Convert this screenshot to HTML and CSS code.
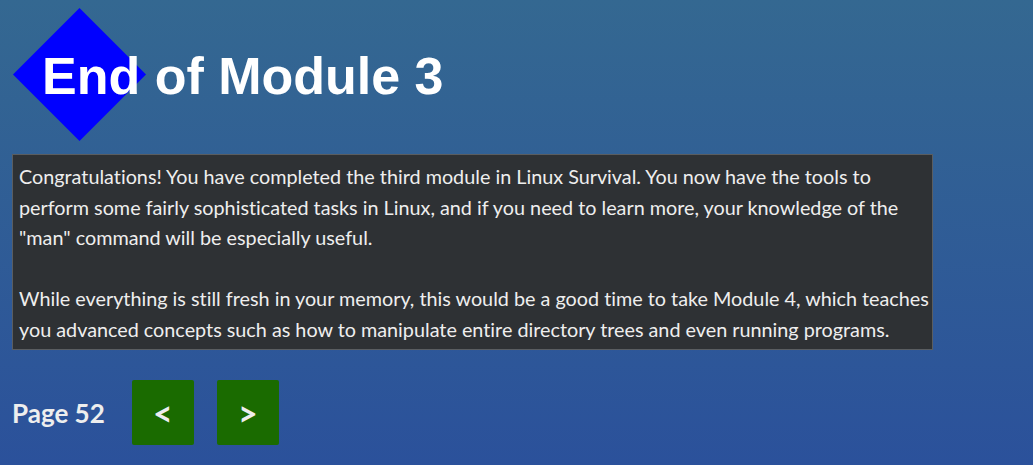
FILE: index.html
```html
<!DOCTYPE html>
<html lang="en">
<head>
<meta charset="utf-8">
<title>End of Module 3</title>
<link rel="stylesheet" href="styles.css">
</head>
<body>
<header class="banner">
  <svg class="diamond" width="133" height="133" viewBox="0 0 133 133" aria-hidden="true">
    <polygon points="66.5,0 133,66.5 66.5,133 0,66.5" fill="#0000ff"/>
  </svg>
  <h1 class="title">End of Module 3</h1>
</header>
<main class="panel">
  <p class="copy">Congratulations! You have completed the third module in Linux Survival. You now have the tools to perform some fairly sophisticated tasks in Linux, and if you need to learn more, your knowledge of the "man" command will be especially useful.<br><br>While everything is still fresh in your memory, this would be a good time to take Module 4, which teaches you advanced concepts such as how to manipulate entire directory trees and even running programs.</p>
</main>
<nav class="pager">
  <span class="page-num">Page 52</span>
  <a class="nav-btn prev" href="#">&lt;</a>
  <a class="nav-btn next" href="#">&gt;</a>
</nav>
</body>
</html>
```
FILE: styles.css
```css
html, body {
  margin: 0;
  height: 100%;
}
body {
  background: linear-gradient(to bottom, #346891 0%, #2b519b 100%);
  color: #eeeeee;
  font-family: Lato, "Open Sans", sans-serif;
  overflow: hidden;
}
.banner {
  position: relative;
  height: 154px;
  box-sizing: border-box;
  padding: 50px 0 0 42px;
}
.diamond {
  position: absolute;
  left: 13px;
  top: 8px;
}
.title {
  position: relative;
  margin: 0;
  font-family: "Liberation Sans", Arial, sans-serif;
  font-weight: bold;
  font-size: 52px;
  line-height: 1;
  color: #ffffff;
}
.panel {
  margin-left: 12px;
  width: 921px;
  box-sizing: border-box;
  background: #2e3134;
  border: 1px solid #5a5d60;
  padding: 6px 1px 5px 6px;
}
.copy {
  margin: 0;
  font-size: 19.8px;
  line-height: 30.5px;
  font-variant-ligatures: none;
  color: #eeeeee;
}
.pager {
  display: flex;
  align-items: center;
  margin-top: 30px;
  padding-left: 12px;
}
.page-num {
  font-weight: bold;
  font-size: 26px;
  color: #eeeeee;
  margin-right: 27px;
}
.nav-btn {
  display: flex;
  align-items: center;
  justify-content: center;
  width: 62px;
  height: 65px;
  background: #1a6b00;
  border-radius: 2px;
  color: #eeeeee;
  text-decoration: none;
  font-weight: bold;
  font-size: 34px;
}
.nav-btn + .nav-btn {
  margin-left: 23px;
}
```
